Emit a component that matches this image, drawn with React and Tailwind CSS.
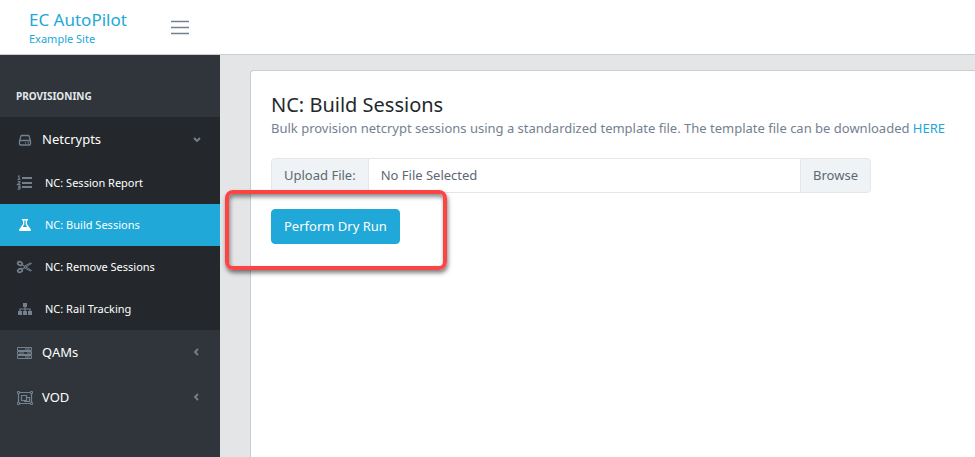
import React, { useState } from "react";

const HddIcon = () => (
  <svg viewBox="0 0 16 16" fill="none" stroke="currentColor" strokeWidth="1.3" className="size-4">
    <path d="M3.5 9 5 3.9q.2-.4.7-.4h6.600q.5 0 .7.4L14.500 9" />
    <rect x="3.500" y="8.500" width="11" height="4.500" rx="1" />
    <path d="M9 10.800h1M11.500 10.800h1.500" />
  </svg>
);

const ListIcon = () => (
  <svg viewBox="0 0 16 16" fill="currentColor" className="size-4">
    <path d="M6 2h10v2H6zM6 7h10v2H6zM6 11h10v2H6z" />
    <path
      d="M2 1.500 3 1v3M1.500 4.500h3M1.700 6.500h2.100v1L1.700 9.500h2.600M1.700 11h2.300l-1 1.300q1.200 0 1.200 1t-2.700.9"
      fill="none"
      stroke="currentColor"
      strokeWidth="1.2"
    />
  </svg>
);

const FlaskIcon = () => (
  <svg viewBox="0 0 16 16" fill="currentColor" className="size-4">
    <path
      fillRule="evenodd"
      d="M6 2h6v1.500h-1V7l3.700 5.300Q15.800 14 14 14H4q-1.800 0-.7-1.700L7 7V3.500H6zM8.300 3.500v4L6.700 10h4.600L9.700 7.500v-4z"
    />
  </svg>
);

const ScissorsIcon = () => (
  <svg viewBox="0 0 16 16" fill="none" stroke="currentColor" className="size-4">
    <ellipse cx="4" cy="4.500" rx="2.400" ry="1.700" strokeWidth="1.700" transform="rotate(25 4 4.500)" />
    <ellipse cx="4" cy="11.500" rx="2.400" ry="1.700" strokeWidth="1.700" transform="rotate(-25 4 11.500)" />
    <path d="M6 5.700 8.500 7.200l5.800-3.200 1.200.5L9.800 8l5.700 3.500-1.200.5-5.800-3.200L6 10.300" />
    <path d="M8 7.300h1v1.400H8z" />
  </svg>
);

const SitemapIcon = () => (
  <svg viewBox="0 0 16 16" fill="currentColor" className="size-4">
    <path d="M7 2h4v4H7zM2 10h4v4H2zM7 10h4v4H7zM12 10h4v4h-4z" />
    <path d="M9 6v5M4 10V8h10v2" fill="none" stroke="currentColor" strokeWidth="1.2" />
  </svg>
);

const ServerIcon = () => (
  <svg viewBox="0 0 16 16" fill="none" stroke="currentColor" className="size-4">
    <path d="M1.500 2.500h14v3h-14zM1.500 6.500h14v3h-14zM1.500 10.500h14v3h-14z" />
    <path d="M9 4h5M3 8h5M11 8h4M9 12h5" />
  </svg>
);

const ObjectGroupIcon = () => (
  <svg viewBox="0 0 18 16" fill="none" stroke="currentColor" className="h-4 w-[18px]">
    <path d="M2.500 3v10M15.500 3v10M4 2.500h10M4 13.500h10" strokeWidth="1.2" />
    <path d="M1.500 1.500h2v2h-2zM14.500 1.500h2v2h-2zM1.500 12.500h2v2h-2zM14.500 12.500h2v2h-2z" />
    <path d="M5.500 5.500h5v5h-5zM11 7.500h2.500v4h-5V11" strokeWidth="1.2" />
  </svg>
);

const Chevron = ({ open }) => (
  <svg
    viewBox="0 0 10 10"
    fill="none"
    stroke="currentColor"
    strokeWidth="1.8"
    className={open ? "mb-0.5 size-[10px] -rotate-90" : "mb-0.5 size-[10px]"}
  >
    <path d="M6 2 3 5l3 3" />
  </svg>
);

const subItems = [
  { label: "NC: Session Report", icon: ListIcon },
  { label: "NC: Build Sessions", icon: FlaskIcon },
  { label: "NC: Remove Sessions", icon: ScissorsIcon },
  { label: "NC: Rail Tracking", icon: SitemapIcon },
];

const closedGroups = [
  { label: "QAMs", icon: ServerIcon },
  { label: "VOD", icon: ObjectGroupIcon },
];

function Sidebar() {
  const [active, setActive] = useState("NC: Build Sessions");
  const [open, setOpen] = useState(true);

  return (
    <nav className="w-[220px] shrink-0 bg-[#2f353a] text-white">
      <h2 className="px-4 pt-8 pb-3 text-[10px] leading-[18px] font-bold text-[#e4e7ea]">
        PROVISIONING
      </h2>

      <div className="bg-[#24282c]">
        <button
          type="button"
          aria-expanded={open}
          onClick={() => setOpen(!open)}
          className="flex h-[45px] w-full items-center pr-[18px] pl-4 text-left text-[13px]"
        >
          <span className="flex w-[26px] text-[#73818f]"><HddIcon /></span>
          <span className="flex-1">Netcrypts</span>
          <span className="text-[#73818f]"><Chevron open={open} /></span>
        </button>

        {open && (
          <ul>
            {subItems.map(({ label, icon: Icon }) => (
              <li key={label}>
                <a
                  href="#"
                  onClick={() => setActive(label)}
                  className={
                    active === label
                      ? "flex h-[42px] items-center bg-[#20a8d8] px-4 text-[11px] text-white"
                      : "flex h-[42px] items-center px-4 text-[11px] text-white"
                  }
                >
                  <span className={active === label ? "flex w-[29px]" : "flex w-[29px] text-[#73818f]"}>
                    <Icon />
                  </span>
                  {label}
                </a>
              </li>
            ))}
          </ul>
        )}
      </div>

      {closedGroups.map(({ label, icon: Icon }) => (
        <button
          key={label}
          type="button"
          className="flex h-[45px] w-full items-center pr-[18px] pl-4 text-left text-[13px]"
        >
          <span className="flex w-[26px] text-[#73818f]"><Icon /></span>
          <span className="flex-1">{label}</span>
          <span className="text-[#73818f]"><Chevron /></span>
        </button>
      ))}
    </nav>
  );
}

function UploadForm() {
  return (
    <form onSubmit={(e) => e.preventDefault()}>
      <div className="flex h-[35px] max-w-[600px] text-[13px] text-[#5c6873]">
        <label
          htmlFor="uploadFile"
          className="flex items-center rounded-l border border-[#e4e7ea] bg-[#f0f3f5] px-3"
        >
          Upload File:
        </label>
        <input
          id="uploadFile"
          type="text"
          readOnly
          value="No File Selected"
          className="min-w-0 flex-1 border-y border-[#e4e7ea] px-3 outline-none"
        />
        <button type="button" className="rounded-r border border-[#e4e7ea] bg-[#f0f3f5] px-3">
          Browse
        </button>
      </div>

      {/* highlighted action */}
      <div className="relative mt-4 w-fit">
        <button
          type="submit"
          className="h-[35px] rounded border border-[#20a8d8] bg-[#20a8d8] px-3 text-[13px] text-white"
        >
          Perform Dry Run
        </button>
        <div className="pointer-events-none absolute -top-[19px] -left-[46px] h-20 w-[222px] rounded-lg border-4 border-[#fd4444] shadow-[1px_3px_4px_rgba(0,0,0,0.5),inset_1px_3px_4px_rgba(0,0,0,0.45)]" />
      </div>
    </form>
  );
}

export default function App() {
  return (
    <div className="flex min-h-screen flex-col bg-[#e4e5e6] font-['Segoe_UI','Noto_Sans',sans-serif]">
      <header className="flex h-[55px] shrink-0 items-center border-b border-[#c8ced3] bg-white">
        <a href="#" className="w-[170px] pl-[29px] text-[#20a8d8]">
          <span className="block text-[17px] leading-6">EC AutoPilot</span>
          <span className="block text-[11px] leading-[14px]">Example Site</span>
        </a>
        <button type="button" aria-label="Toggle menu" className="text-[#73818f]">
          <svg viewBox="0 0 20 20" fill="none" stroke="currentColor" strokeWidth="1.5" className="size-5">
            <path d="M1 4.500h18M1 10.500h18M1 16.500h18" />
          </svg>
        </button>
      </header>

      <div className="flex flex-1">
        <Sidebar />
        <main className="flex min-w-0 flex-1 pt-[15px] pl-[30px]">
          <section className="flex-1 rounded-tl border-t border-l border-[#c8ced3] bg-white px-5 pt-5">
            <h1 className="text-xl leading-7 text-[#23282c]">NC: Build Sessions</h1>
            <p className="mb-[21px] text-[13px] leading-[18px] text-[#73818f]">
              Bulk provision netcrypt sessions using a standardized template file. The template file can be
              downloaded <a href="#" className="text-[#20a8d8]">HERE</a>
            </p>
            <UploadForm />
          </section>
        </main>
      </div>
    </div>
  );
}
